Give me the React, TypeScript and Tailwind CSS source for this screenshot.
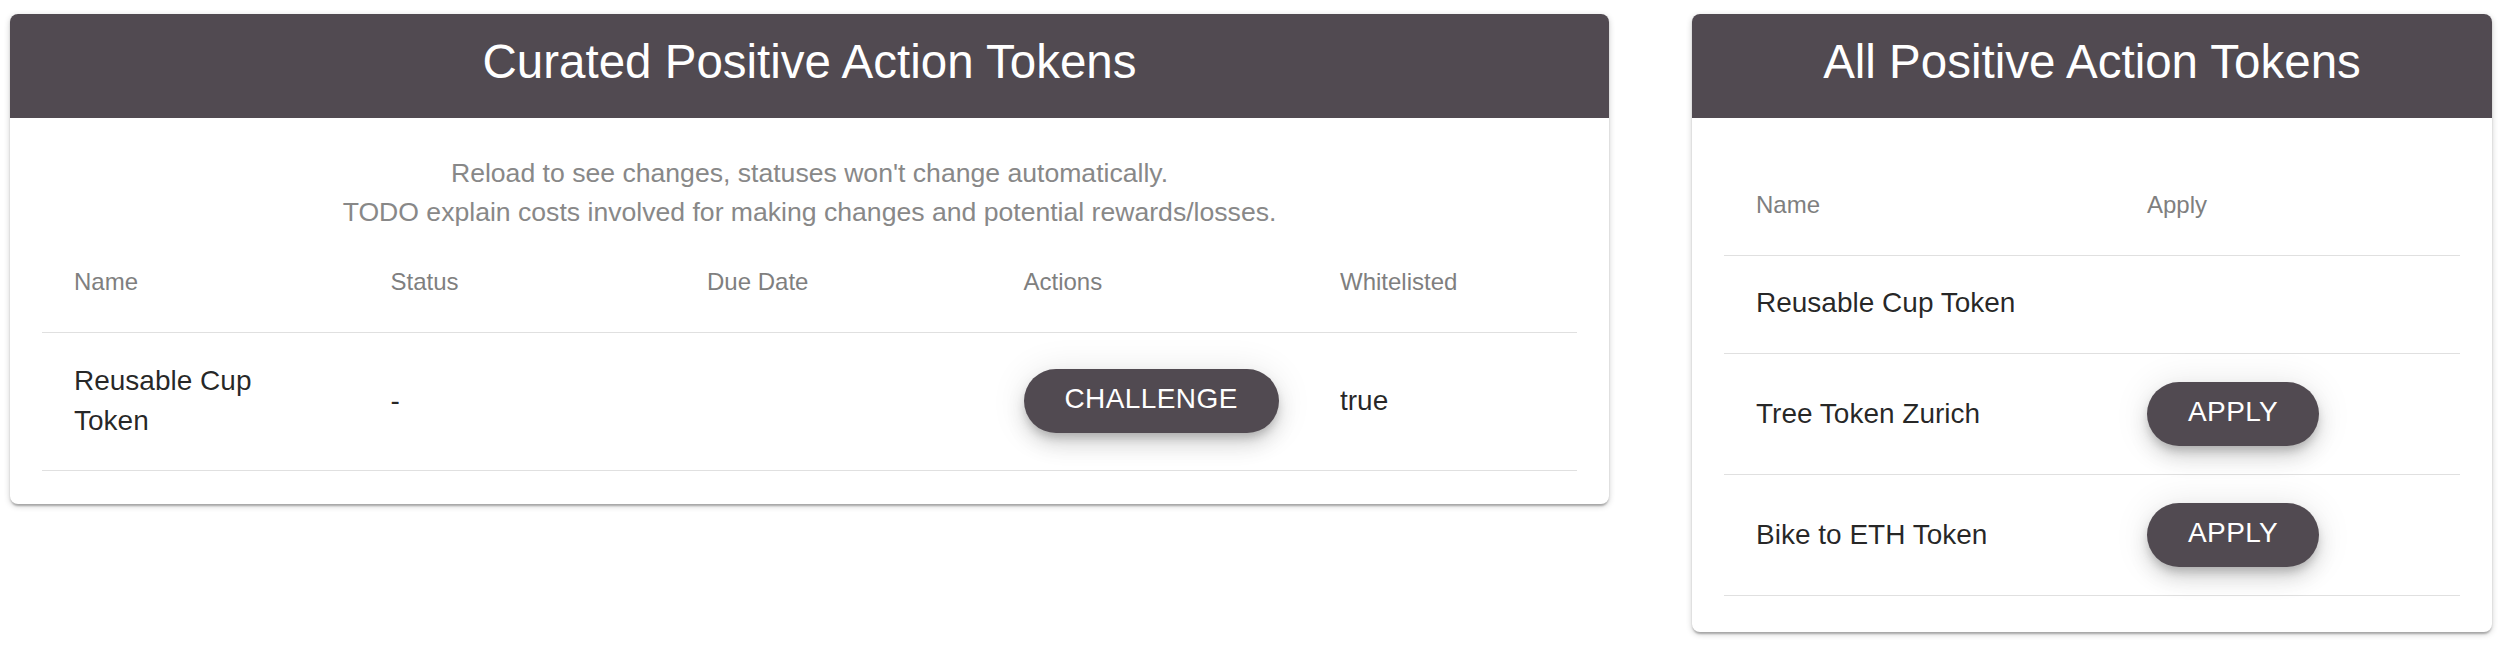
import React from "react";

const font = { fontFamily: '"Liberation Sans", Arial, Helvetica, sans-serif' };

function PillButton({ label }: { label: string }) {
  return (
    <button className="h-[64px] px-[41px] pb-[4px] rounded-full bg-[#514a51] text-white text-[28px] tracking-[0.4px] uppercase leading-none shadow-[0_6px_10px_-2px_rgba(0,0,0,0.2),0_12px_20px_0_rgba(0,0,0,0.12),0_2px_36px_0_rgba(0,0,0,0.1)]">
      {label}
    </button>
  );
}

function CardHeader({ title }: { title: string }) {
  return (
    <div className="h-[104px] bg-[#514a51] text-white text-[47.5px] leading-none flex items-center justify-center pb-[8px]">
      {title}
    </div>
  );
}

const cardCls =
  "bg-white rounded-[8px] overflow-hidden shadow-[0_2px_6px_0_rgba(0,0,0,0.2),0_2px_2px_0_rgba(0,0,0,0.14),0_4px_2px_-2px_rgba(0,0,0,0.12)]";

function CuratedCard() {
  const cols = "grid grid-cols-[316.5px_316.5px_316.5px_316.5px_1fr]";
  return (
    <div className={`${cardCls} w-[1599px]`}>
      <CardHeader title="Curated Positive Action Tokens" />
      <div className="pt-[36px] px-[32px] pb-[33px]">
        <div className="text-center text-[26.6px] leading-[38.5px] text-[#888888]">
          <div>Reload to see changes, statuses won't change automatically.</div>
          <div>TODO explain costs involved for making changes and potential rewards/losses.</div>
        </div>
        <div className={`${cols} h-[102px] items-center border-b border-[#e0e0e0] text-[24px] text-[#7f7f7f]`}>
          <div className="px-[32px]">Name</div>
          <div className="px-[32px]">Status</div>
          <div className="px-[32px]">Due Date</div>
          <div className="px-[32px]">Actions</div>
          <div className="px-[32px]">Whitelisted</div>
        </div>
        <div className={`${cols} h-[138px] pb-[2px] items-center border-b border-[#e0e0e0] text-[28px] leading-[40px] text-[rgba(0,0,0,0.85)]`}>
          <div className="px-[32px]">Reusable Cup Token</div>
          <div className="px-[32px]">-</div>
          <div className="px-[32px]"></div>
          <div className="px-[32px] flex">
            <PillButton label="Challenge" />
          </div>
          <div className="px-[32px]">true</div>
        </div>
      </div>
    </div>
  );
}

function AllCard() {
  const cols = "grid grid-cols-[391px_1fr]";
  const rows: { name: string; apply: boolean }[] = [
    { name: "Reusable Cup Token", apply: false },
    { name: "Tree Token Zurich", apply: true },
    { name: "Bike to ETH Token", apply: true },
  ];
  return (
    <div className={`${cardCls} w-[800px]`}>
      <CardHeader title="All Positive Action Tokens" />
      <div className="pt-[36px] px-[32px] pb-[36px]">
        <div className={`${cols} h-[102px] items-center border-b border-[#e0e0e0] text-[24px] text-[#7f7f7f]`}>
          <div className="px-[32px]">Name</div>
          <div className="px-[32px]">Apply</div>
        </div>
        {rows.map((r) => (
          <div
            key={r.name}
            className={`${cols} ${r.apply ? "h-[121px]" : "h-[98px] pb-[3px]"} items-center border-b border-[#e0e0e0] text-[28px] leading-[40px] text-[rgba(0,0,0,0.85)]`}
          >
            <div className="px-[32px]">{r.name}</div>
            <div className="px-[32px] flex">{r.apply && <PillButton label="Apply" />}</div>
          </div>
        ))}
      </div>
    </div>
  );
}

export default function App() {
  return (
    <div style={font} className="w-[2510px] h-[652px] bg-white flex items-start gap-[83px] pl-[10px] pt-[14px]">
      <CuratedCard />
      <AllCard />
    </div>
  );
}
